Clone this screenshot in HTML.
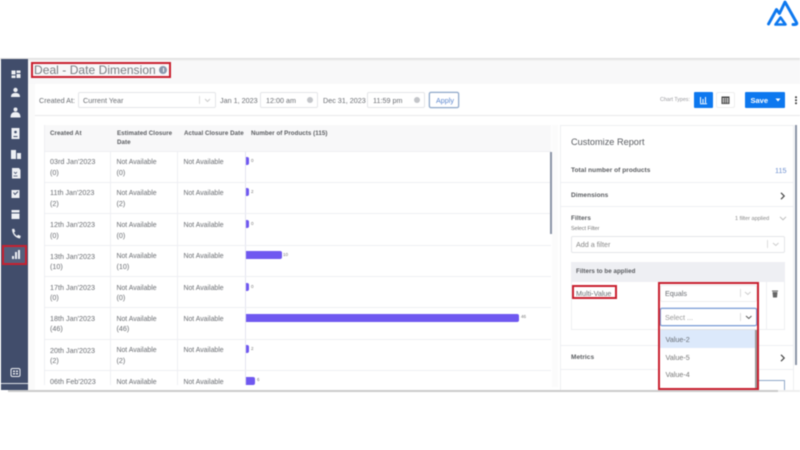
<!DOCTYPE html>
<html><head><meta charset="utf-8">
<style>
html,body{margin:0;padding:0;width:800px;height:450px;overflow:hidden;background:#fff}
body{position:relative;font-family:"Liberation Sans",sans-serif;color:#555;filter:blur(.45px)}
.a{position:absolute}
.t{position:absolute;white-space:nowrap;font-size:7.2px;line-height:9px;color:#6a6d72;letter-spacing:0}
.na{font-size:6.9px;margin-top:.5px}
.h{font-weight:bold;color:#5a5c60;font-size:6.2px;letter-spacing:.05px}
.b{position:absolute;background:#6f58f0;border-radius:0 2px 2px 0}
.l{position:absolute;background:#eeeff3}
.box{position:absolute;background:#fff;border:1px solid #e4e5e8;border-radius:2px;box-sizing:border-box}
.red{position:absolute;border:2px solid #c9202f;box-sizing:border-box}
.n{position:absolute;font-size:4.5px;line-height:6px;color:#777}
</style></head><body>
<!-- logo -->
<svg class="a" style="left:765px;top:0" width="35" height="28" viewBox="0 0 35 28" fill="none" stroke="#0d78ef" stroke-width="2.900" stroke-linecap="round" stroke-linejoin="round"><path d="M3.500 24L11.500 9.500L14.500 13.500L20 2L31.500 22.500Q32.500 24.500 30 24.500H28"/><path d="M10.500 24.500L15.500 17.500L20.500 24.500Z" stroke-width="2.600"/></svg>

<!-- app bg -->
<div class="a" style="left:0;top:58px;width:800px;height:332px;background:#fff"></div>
<div class="a" style="left:0;top:58px;width:800px;height:3px;background:linear-gradient(#dcdcdc,#f7f7f7)"></div>
<div class="a" style="left:28px;top:61px;width:772px;height:23px;background:#f8f8f9"></div>
<div class="a" style="left:28px;top:84px;width:7px;height:306px;background:#fafafa"></div>
<div class="a" style="left:35px;top:84px;width:765px;height:32px;background:#fff"></div>
<div class="l" style="left:35px;top:115px;width:765px;height:1px;background:#e8e8ea"></div>

<!-- sidebar -->
<div class="a" style="left:1px;top:59px;width:27px;height:331px;background:#414d6b"></div>
<div class="a" style="left:1px;top:383px;width:27px;height:1px;background:#dfe2e8"></div>
<div class="a" style="left:3px;top:246px;width:23px;height:17px;background:#55607c"></div>
<svg class="a" style="left:1px;top:59px" width="27" height="331" viewBox="0 0 27 331" fill="#eef0f4">
<path d="M10.500 11.500h4v4h-4zM15.500 11.500h4v2.500h-4zM15.500 15h4v4h-4zM10.500 16.500h4v2.500h-4z"/>
<circle cx="14.500" cy="31" r="2.200"/><path d="M10 38c0-3.500 2-4 4.500-4s4.500.500 4.500 4z"/>
<circle cx="14.500" cy="50.500" r="2"/><path d="M9.500 58.500c0-4 2-5.500 5-5.500s5 1.500 5 5.500z"/>
<path d="M10.500 69h8v11h-8z"/>
<path d="M10 100h5v-9h-5zM16 100h4v-6h-4z"/>
<path d="M11 109h7l1.500 2v8.500h-8.500z"/>
<path d="M10.500 131h8v8h-8z"/>
<path d="M10.500 151h8v9h-8z"/>
<path d="M11 170c0 5 3.500 9 8 9.500l.8-2.500-2.600-1.200-1.200 1.100c-1.400-.8-2.400-2-3-3.400l1.200-1-1-2.700z"/>
<path d="M11 200h2v-3h-2zM14 200h2v-7h-2zM17 200h2v-9h-2z" />
<rect x="10" y="309.500" width="9" height="8" rx="1.500" fill="none" stroke="#eef0f4"/><path d="M12 311.500h2v1.500h-2zM15 311.500h2v1.500h-2zM12 314h2v1.500h-2zM15 314h2v1.500h-2z"/>
</svg>
<svg class="a" style="left:1px;top:59px" width="27" height="331" viewBox="0 0 27 331"><circle cx="14.500" cy="73" r="1.300" fill="#414d6b"/><path d="M12.500 77.500h4" stroke="#414d6b"/><path d="M12.500 133.500l1.500 2 3-3" stroke="#414d6b" fill="none"/><path d="M10.500 154h8" stroke="#414d6b"/><path d="M13 113l1.500 1.500 1.500-1.500M12.500 117h4" stroke="#414d6b" fill="none" stroke-width=".8"/></svg>

<!-- title -->
<div class="t" style="left:34px;top:63px;font-size:12px;line-height:14px;color:#7a7d82;letter-spacing:.05px">Deal - Date Dimension</div>
<div class="a" style="left:159px;top:66px;width:8px;height:8px;border-radius:50%;background:#8a98ad"></div>
<div class="a" style="left:162.500px;top:68px;width:1px;height:4px;background:#fff"></div>
<div class="red" style="left:31px;top:62px;width:140px;height:16px"></div>

<!-- toolbar -->
<div class="t" style="left:39px;top:95.500px">Created At:</div>
<div class="box" style="left:78px;top:92px;width:138px;height:16px"></div>
<div class="t" style="left:83px;top:95.500px">Current Year</div>
<div class="a" style="left:199px;top:96px;width:1px;height:8px;background:#ddd"></div>
<svg class="a" style="left:204px;top:98px" width="7" height="5"><path d="M1 1l2.500 2.500L6 1" fill="none" stroke="#ccc"/></svg>
<div class="t" style="left:220px;top:95.500px">Jan 1, 2023</div>
<div class="box" style="left:260px;top:92px;width:58px;height:16px"></div>
<div class="t" style="left:266px;top:95.500px">12:00 am</div>
<div class="a" style="left:307px;top:97px;width:6px;height:6px;border-radius:50%;background:#c3c5c9"></div>
<div class="t" style="left:323px;top:95.500px">Dec 31, 2023</div>
<div class="box" style="left:367px;top:92px;width:58px;height:16px"></div>
<div class="t" style="left:373px;top:95.500px">11:59 pm</div>
<div class="a" style="left:414px;top:97px;width:6px;height:6px;border-radius:50%;background:#c3c5c9"></div>
<div class="box" style="left:429px;top:92px;width:30px;height:16px;border:1px solid #8fa8c8;box-shadow:0 0 0 .5px #c5d4e6"></div>
<div class="t" style="left:436px;top:95.500px;color:#5f8ad0">Apply</div>
<div class="t" style="left:660px;top:96px;font-size:5.300px;color:#9a9a9e;letter-spacing:0">Chart Types:</div>
<div class="a" style="left:694px;top:92px;width:19px;height:16px;background:#0d78ef;border-radius:1px"></div>
<svg class="a" style="left:694px;top:92px" width="19" height="16"><path d="M6.500 5v6M9 7v4M11.500 5v6M6 11.700h7" stroke="#fff" fill="none"/></svg>
<div class="box" style="left:716px;top:92px;width:19px;height:16px;border-color:#eee"></div>
<svg class="a" style="left:716px;top:92px" width="19" height="16"><rect x="6" y="5" width="7" height="6.500" fill="none" stroke="#444" stroke-width="1"/><path d="M6 6h7M6 8h7M6 10h7M8.500 6v5M10.500 6v5" stroke="#444" stroke-width=".7"/></svg>
<div class="a" style="left:745px;top:92px;width:40px;height:16px;background:#0d78ef;border-radius:1px"></div>
<div class="t" style="left:750.500px;top:95.500px;color:#fff;font-weight:bold;font-size:7.500px">Save</div>
<svg class="a" style="left:775px;top:98px" width="7" height="4"><path d="M0.500 0.500h5L3 3.500z" fill="#fff"/></svg>
<svg class="a" style="left:794px;top:96px" width="4" height="9" fill="#333"><circle cx="2" cy="1.200" r="1"/><circle cx="2" cy="4.200" r="1"/><circle cx="2" cy="7.200" r="1"/></svg>

<!-- table -->
<div class="a" style="left:44px;top:125px;width:507px;height:260px;overflow:hidden;background:#fff">
<div class="a" style="left:0;top:0;width:507px;height:27px;background:#f8f8f9"></div>
</div>
<div class="l" style="left:44px;top:125px;width:1px;height:260px"></div>
<div class="l" style="left:110px;top:152px;width:1px;height:233px"></div>
<div class="l" style="left:177px;top:152px;width:1px;height:233px"></div>
<div class="l" style="left:245px;top:152px;width:1px;height:233px;background:#e4e4f0"></div>
<div class="l" style="left:44px;top:151px;width:507px;height:1px"></div>
<div class="l" style="left:44px;top:182px;width:507px;height:1px"></div>
<div class="l" style="left:44px;top:213px;width:507px;height:1px"></div>
<div class="l" style="left:44px;top:245px;width:507px;height:1px"></div>
<div class="l" style="left:44px;top:276px;width:507px;height:1px"></div>
<div class="l" style="left:44px;top:307px;width:507px;height:1px"></div>
<div class="l" style="left:44px;top:339px;width:507px;height:1px"></div>
<div class="l" style="left:44px;top:370px;width:507px;height:1px"></div>
<div class="a" style="left:550px;top:152px;width:1.500px;height:82px;background:#8a93a6"></div>
<div class="a" style="left:551.500px;top:125px;width:6px;height:262px;background:#fbfbfb"></div>

<div class="t h" style="left:50px;top:129px">Created At</div>
<div class="t h" style="left:117px;top:129px">Estimated Closure</div>
<div class="t h" style="left:117px;top:138px">Date</div>
<div class="t h" style="left:184px;top:129px">Actual Closure Date</div>
<div class="t h" style="left:251px;top:129px">Number of Products (115)</div>

<div class="t" style="left:50px;top:157px">03rd Jan'2023</div><div class="t" style="left:50px;top:167.500px">(0)</div><div class="t na" style="left:116.500px;top:157px">Not Available</div><div class="t" style="left:116.500px;top:167.500px">(0)</div><div class="t na" style="left:183.500px;top:157px">Not Available</div>
<div class="t" style="left:50px;top:188px">11th Jan'2023</div><div class="t" style="left:50px;top:198.500px">(2)</div><div class="t na" style="left:116.500px;top:188px">Not Available</div><div class="t" style="left:116.500px;top:198.500px">(2)</div><div class="t na" style="left:183.500px;top:188px">Not Available</div>
<div class="t" style="left:50px;top:220px">12th Jan'2023</div><div class="t" style="left:50px;top:230.500px">(0)</div><div class="t na" style="left:116.500px;top:220px">Not Available</div><div class="t" style="left:116.500px;top:230.500px">(0)</div><div class="t na" style="left:183.500px;top:220px">Not Available</div>
<div class="t" style="left:50px;top:251.500px">13th Jan'2023</div><div class="t" style="left:50px;top:261.500px">(10)</div><div class="t na" style="left:116.500px;top:251.500px">Not Available</div><div class="t" style="left:116.500px;top:261.500px">(10)</div><div class="t na" style="left:183.500px;top:251.500px">Not Available</div>
<div class="t" style="left:50px;top:283px">17th Jan'2023</div><div class="t" style="left:50px;top:293px">(0)</div><div class="t na" style="left:116.500px;top:283px">Not Available</div><div class="t" style="left:116.500px;top:293px">(0)</div><div class="t na" style="left:183.500px;top:283px">Not Available</div>
<div class="t" style="left:50px;top:314px">18th Jan'2023</div><div class="t" style="left:50px;top:324px">(46)</div><div class="t na" style="left:116.500px;top:314px">Not Available</div><div class="t" style="left:116.500px;top:324px">(46)</div><div class="t na" style="left:183.500px;top:314px">Not Available</div>
<div class="t" style="left:50px;top:345.500px">20th Jan'2023</div><div class="t" style="left:50px;top:355.500px">(2)</div><div class="t na" style="left:116.500px;top:345.500px">Not Available</div><div class="t" style="left:116.500px;top:355.500px">(2)</div><div class="t na" style="left:183.500px;top:345.500px">Not Available</div>
<div class="a" style="left:44px;top:377px;width:507px;height:8px;overflow:hidden">
<div class="t" style="left:6px;top:0">06th Feb'2023</div><div class="t na" style="left:72.500px;top:0">Not Available</div><div class="t na" style="left:139.500px;top:0">Not Available</div>
</div>

<div class="b" style="left:246px;top:157px;width:3px;height:8px"></div><div class="n" style="left:251px;top:158px">0</div>
<div class="b" style="left:246px;top:188px;width:3px;height:8px"></div><div class="n" style="left:251px;top:189px">2</div>
<div class="b" style="left:246px;top:220px;width:3px;height:8px"></div><div class="n" style="left:251px;top:221px">0</div>
<div class="b" style="left:246px;top:251px;width:36px;height:8px"></div><div class="n" style="left:283px;top:252px">10</div>
<div class="b" style="left:246px;top:283px;width:3px;height:8px"></div><div class="n" style="left:251px;top:284px">0</div>
<div class="b" style="left:246px;top:314px;width:273px;height:8px"></div><div class="n" style="left:521px;top:314px">46</div>
<div class="b" style="left:246px;top:345px;width:3px;height:8px"></div><div class="n" style="left:251px;top:346px">2</div>
<div class="b" style="left:246px;top:377px;width:9px;height:7.500px"></div><div class="n" style="left:257px;top:377px">6</div>

<!-- customize panel -->
<div class="a" style="left:560px;top:125px;width:234px;height:265px;background:#fff;border:1px solid #eeeff2;border-bottom:0;box-sizing:border-box"></div>
<div class="a" style="left:795px;top:125px;width:1.500px;height:240px;background:#8a93a6"></div>
<div class="t" style="left:571px;top:137px;font-size:9.200px;line-height:11px;color:#5a5d62">Customize Report</div>
<div class="t h" style="left:571px;top:166px;font-size:6.500px">Total number of products</div>
<div class="t" style="left:775px;top:166px;color:#6d8fd0">115</div>
<div class="l" style="left:561px;top:182px;width:233px;height:1px"></div>
<div class="t h" style="left:571px;top:190.500px;font-size:6.500px">Dimensions</div>
<svg class="a" style="left:780px;top:192px" width="6" height="8"><path d="M1 .8L4.200 4 1 7.200" fill="none" stroke="#444" stroke-width="1.200"/></svg>
<div class="l" style="left:561px;top:206px;width:233px;height:1px"></div>
<div class="t h" style="left:571px;top:214px;font-size:6.500px">Filters</div>
<div class="t" style="left:735px;top:214.500px;font-size:5.500px;color:#888">1 filter applied</div>
<svg class="a" style="left:779px;top:216px" width="8" height="5"><path d="M1 .8l3 3 3-3" fill="none" stroke="#bbb"/></svg>
<div class="t" style="left:571px;top:225px;font-size:5.400px;color:#777">Select Filter</div>
<div class="box" style="left:571px;top:236px;width:214px;height:17px"></div>
<div class="t" style="left:576px;top:240px;color:#888">Add a filter</div>
<div class="a" style="left:767px;top:240px;width:1px;height:8px;background:#ddd"></div>
<svg class="a" style="left:772px;top:242px" width="8" height="5"><path d="M1 1l2.800 2.500L6.500 1" fill="none" stroke="#ccc"/></svg>

<div class="a" style="left:571px;top:262px;width:214px;height:20px;background:#eeeff3"></div>
<div class="t h" style="left:576px;top:267px;font-size:6.200px">Filters to be applied</div>
<div class="a" style="left:571px;top:282px;width:214px;height:48px;border:1px solid #eeeff2;border-top:0;box-sizing:border-box"></div>
<div class="l" style="left:766px;top:282px;width:1px;height:48px"></div>
<div class="t" style="left:576px;top:288.500px">Multi-Value</div>
<div class="red" style="left:572px;top:285px;width:45px;height:14px"></div>
<svg class="a" style="left:771px;top:289px" width="8" height="9" fill="#666"><path d="M1 1.500h6v1H1zM1.500 3h5l-.5 5.500H2z"/></svg>

<div class="l" style="left:561px;top:345px;width:233px;height:1px"></div>
<div class="t h" style="left:571px;top:353px;font-size:6.500px">Metrics</div>
<svg class="a" style="left:780px;top:354px" width="6" height="8"><path d="M1 .8L4.200 4 1 7.200" fill="none" stroke="#444" stroke-width="1.200"/></svg>
<div class="l" style="left:561px;top:369px;width:233px;height:1px"></div>
<div class="a" style="left:750px;top:380px;width:35px;height:10px;border:1px solid #8fa8c8;border-bottom:0;box-sizing:border-box"></div>

<!-- selects -->
<div class="box" style="left:660px;top:285px;width:97px;height:17px;border-color:#eee"></div>
<div class="t" style="left:665px;top:289px">Equals</div>
<div class="a" style="left:740px;top:289px;width:1px;height:8px;background:#ddd"></div>
<svg class="a" style="left:744px;top:291px" width="8" height="5"><path d="M1 1l2.800 2.500L6.500 1" fill="none" stroke="#ccc"/></svg>
<div class="box" style="left:660px;top:308px;width:97px;height:18px;border:1px solid #7d9fd6;box-shadow:0 0 0 .5px #a9c0e6"></div>
<div class="t" style="left:665px;top:313px;color:#999">Select ...</div>
<div class="a" style="left:740px;top:313px;width:1px;height:8px;background:#ddd"></div>
<svg class="a" style="left:745px;top:315px" width="8" height="5"><path d="M1 1l2.800 2.500L6.500 1" fill="none" stroke="#555"/></svg>
<div class="a" style="left:660px;top:330px;width:97px;height:60px;background:#fff;box-shadow:0 0 2px rgba(0,0,0,.15)"></div>
<div class="a" style="left:660px;top:330px;width:95px;height:18px;background:#dce9fb"></div>
<div class="a" style="left:755px;top:330px;width:2px;height:59px;background:#999"></div>
<div class="t" style="left:665.500px;top:335px;color:#6a7078">Value-2</div>
<div class="t" style="left:665.500px;top:352.500px;color:#777">Value-5</div>
<div class="t" style="left:665.500px;top:369.500px;color:#777">Value-4</div>

<!-- red boxes -->
<div class="red" style="left:658px;top:282px;width:101px;height:108px"></div>
<div class="red" style="left:2px;top:245px;width:25px;height:20px"></div>

<!-- bottom edge -->
<div class="a" style="left:0;top:390px;width:800px;height:60px;background:#fff"></div>
<div class="a" style="left:8px;top:390px;width:770px;height:1.500px;background:#ccc"></div>
<div class="a" style="left:778px;top:390px;width:22px;height:1.500px;background:#eee"></div>
<div class="a" style="left:1px;top:388px;width:27px;height:2px;background:#414d6b"></div>
</body></html>
